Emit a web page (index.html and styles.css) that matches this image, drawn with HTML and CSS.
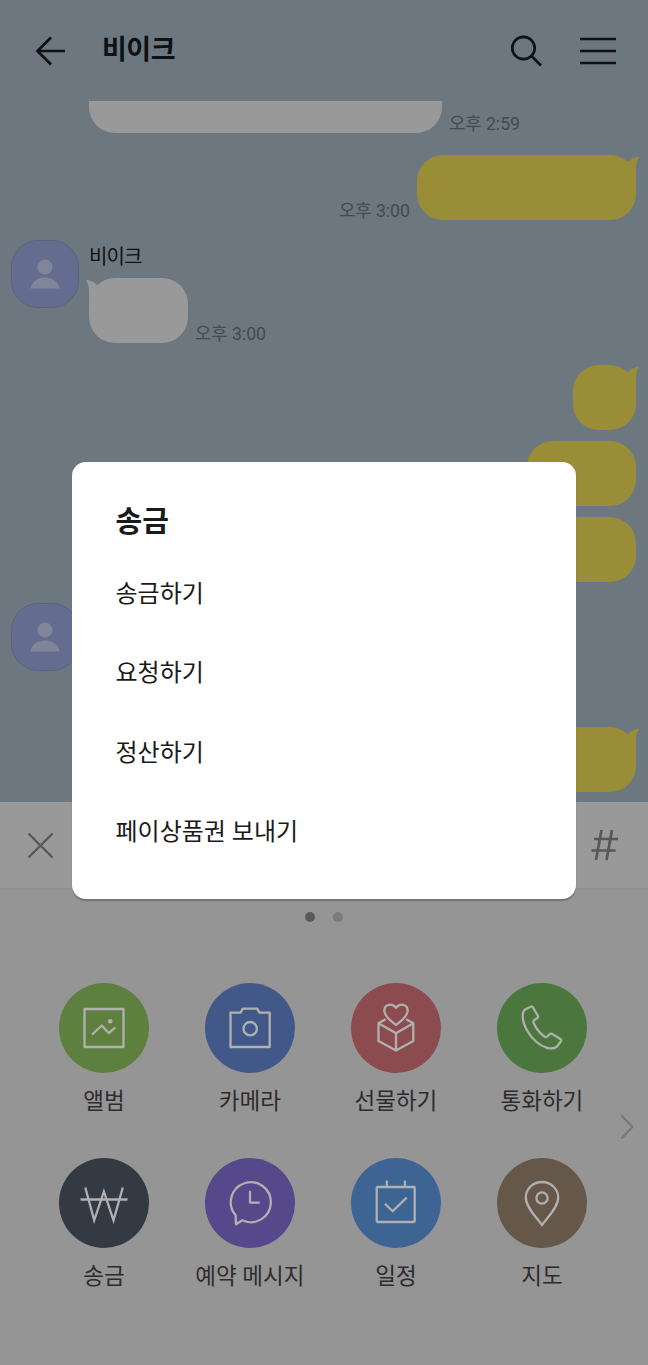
FILE: index.html
```html
<!DOCTYPE html>
<html lang="ko">
<head>
<meta charset="utf-8">
<meta name="viewport" content="width=device-width">
<title>비이크</title>
<link rel="stylesheet" href="styles.css">
</head>
<body>
<div class="screen">
  <header class="header">
    <svg class="back" width="32" height="32" viewBox="0 0 32 32"><path d="M17 2.500 3.500 16 17 29.500M3.500 16H31"/></svg>
    <h1 class="room">비이크</h1>
    <svg class="search" width="34" height="34" viewBox="0 0 34 34"><circle cx="13.500" cy="14" r="11.200"/><path d="m21.500 22 9.500 9.500"/></svg>
    <svg class="menu-icon" width="38" height="30" viewBox="0 0 38 30"><path d="M1 3h36M1 15h36M1 27h36"/></svg>
  </header>

  <main class="chat">
    <div class="row received cut"><div class="bubble"></div><time>오후 2:59</time></div>
    <div class="row sent first"><time>오후 3:00</time><div class="bubble wide"><svg class="tail" width="17" height="25" viewBox="0 0 17 25"><path d="M5 7Q10 2 16.500 1.500Q13 6 13 14V25H5Z"/></svg></div></div>
    <div class="person">
      <div class="avatar"><svg width="30" height="30" viewBox="0 0 30 30"><circle cx="15" cy="8" r="7.600"/><path d="M.5 29.500C2 22 8 18.500 15 18.500S28 22 29.500 29.500Z"/></svg></div>
      <div class="message">
        <div class="name">비이크</div>
        <div class="row received"><div class="bubble short"><svg class="tail" width="17" height="25" viewBox="0 0 17 25"><path d="M12 7Q7 2 .8 1.800Q4 6 4 14V25H12Z"/></svg></div><time>오후 3:00</time></div>
      </div>
    </div>
    <div class="row sent burst"><div class="bubble tiny"><svg class="tail" width="17" height="25" viewBox="0 0 17 25"><path d="M5 7Q10 2 16.500 1.500Q13 6 13 14V25H5Z"/></svg></div></div>
    <div class="row sent next"><div class="bubble medium"></div></div>
    <div class="row sent next"><div class="bubble medium"></div></div>
    <div class="person second">
      <div class="avatar"><svg width="30" height="30" viewBox="0 0 30 30"><circle cx="15" cy="8" r="7.600"/><path d="M.5 29.500C2 22 8 18.500 15 18.500S28 22 29.500 29.500Z"/></svg></div>
    </div>
    <div class="row sent last"><div class="bubble medium"><svg class="tail" width="17" height="25" viewBox="0 0 17 25"><path d="M5 7Q10 2 16.500 1.500Q13 6 13 14V25H5Z"/></svg></div></div>
  </main>

  <div class="input-bar">
    <svg width="28" height="28" viewBox="0 0 28 28"><path d="m2.500 2.500 24 24M26.500 2.500 2.500 26.500"/></svg>
    <svg class="hash" width="28" height="32" viewBox="0 0 28 32"><path d="M10.500 1 5 31M21 1 15.500 31M3 10h24M.5 21.500h24"/></svg>
  </div>

  <section class="panel">
    <div class="dots"><i class="on"></i><i></i></div>
    <div class="grid">
      <div class="item"><svg class="disc album" viewBox="0 0 90 90"><path d="M25.500 26h39v38h-39zM33 51.700l9.700-9.200 7 7.500 6.600-5.300"/><circle class="fill" cx="51.200" cy="38.300" r="2.300"/></svg><span>앨범</span></div>
      <div class="item"><svg class="disc camera" viewBox="0 0 90 90"><path d="M25.500 29.700h10l2.300-4.100h14.400l2.300 4.100h10.200V64H25.500z"/><circle cx="45.200" cy="45.700" r="6.700"/></svg><span>카메라</span></div>
      <div class="item"><svg class="disc gift" viewBox="0 0 90 90"><path d="M45 42C41 38.500 33.300 34 33.300 27.800C33.300 21.400 41 19.500 45 24.900C49 19.500 56.700 21.400 56.700 27.800C56.700 34 49 38.500 45 42ZM34.600 36.300 27.500 40.300V58L45 67.500 62.300 58V40.300L55.200 36.300M27.500 40.300 45 50.300 62.300 40.300M45 50.300V67.500"/></svg><span>선물하기</span></div>
      <div class="item"><svg class="disc call" viewBox="0 0 90 90"><path d="M28.500 26.300 33.700 23.800Q35.200 23 36 24.500L41 33Q41.500 34.200 40.500 35L37.300 37Q35.800 38 36.600 40Q40.500 48.500 47.500 53.600Q49 54.600 50.200 53.500L53 51Q54 50.200 55.200 50.900L63.300 56Q64.800 57 63.800 58.500L60.800 62.500C55.500 69 44.500 63.300 39.500 59C32 52.500 25.700 42 25.700 33Q25.700 28 28.500 26.300Z"/></svg><span>통화하기</span></div>
      <div class="item"><svg class="disc won" viewBox="0 0 90 90"><path d="M26.300 29.500 35.200 62.300 44.900 33.500 54.500 62.300 63.800 29.500M21.500 41.500h47"/></svg><span>송금</span></div>
      <div class="item"><svg class="disc reserve" viewBox="0 0 90 90"><path d="M30.600 57.200A20 20 0 1 1 37.300 62.300L31 66.300ZM45 32.800V44.600H54.800"/></svg><span>예약 메시지</span></div>
      <div class="item"><svg class="disc calendar" viewBox="0 0 90 90"><rect x="25.700" y="29" width="38" height="35" rx="1"/><path d="M35.900 22.500V29M53.900 22.500V29M34 45.700l7.700 7.500 14-13.500"/></svg><span>일정</span></div>
      <div class="item"><svg class="disc map" viewBox="0 0 90 90"><path d="M45 67.200C41 60.700 28.800 50 28.800 39.500A16.200 15.500 0 0 1 61.200 39.500C61.200 50 49 60.700 45 67.200Z"/><circle cx="45" cy="40" r="5.600"/></svg><span>지도</span></div>
    </div>
    <svg class="more" width="14" height="26" viewBox="0 0 14 26"><path d="m1.500 1.500 11 11.500-11 11.500"/></svg>
  </section>

  <div class="dialog">
    <h2>송금</h2>
    <ul>
      <li>송금하기</li>
      <li>요청하기</li>
      <li>정산하기</li>
      <li>페이상품권 보내기</li>
    </ul>
  </div>
</div>
</body>
</html>
```
FILE: styles.css
```css
* { box-sizing: border-box; }
body { margin: 0; font-family: Roboto, "Noto Sans CJK KR", sans-serif; }
svg { display: block; flex: none; }
h1, h2, ul { margin: 0; padding: 0; }

.screen {
  position: relative;
  display: flex;
  flex-direction: column;
  width: 648px;
  height: 1365px;
  overflow: hidden;
  background: #6d7780;
  fill: none;
}

.header {
  display: flex;
  align-items: center;
  height: 101px;
  padding: 0 31px 0 34px;
  stroke: #101112;
  stroke-width: 2.7;
}
.room {
  flex: 1;
  padding: 0 0 2px 36px;
  color: #101112;
  font-size: 27px;
  line-height: 36px;
  font-weight: 700;
  letter-spacing: -0.5px;
}
.menu-icon { margin-left: 35px; }

.chat { height: 701px; }
.row { display: flex; align-items: flex-end; gap: 7px; }
.row time {
  height: 19px;
  color: #434a52;
  font-size: 17.7px;
  line-height: 20px;
  white-space: nowrap;
}
.bubble { position: relative; height: 65px; border-radius: 26px; }
.received .bubble { background: #999; fill: #999; }
.sent { justify-content: flex-end; padding-right: 12px; }
.sent .bubble { background: #998d37; fill: #998d37; }
.cut { padding-left: 89px; }
.cut .bubble { width: 353px; height: 32px; border-radius: 0 0 26px 26px; }
.first { margin-top: 22px; }
.wide { width: 219px; }
.short { width: 99px; }
.tiny { width: 63px; }
.medium { width: 109px; }
.tail { position: absolute; top: 0; }
.sent .tail { right: -4px; }
.received .tail { left: -4px; }

.person { display: flex; gap: 10px; margin-top: 20px; padding-left: 11px; }
.avatar {
  display: grid;
  place-items: center;
  width: 68px;
  height: 68px;
  border: 1px solid #59627f;
  border-radius: 27px;
  background: #646d90;
  fill: #80859a;
}
.name {
  height: 38px;
  padding-top: 1px;
  color: #101112;
  font-size: 20px;
  line-height: 32px;
  letter-spacing: -0.9px;
}
.burst { margin-top: 22px; }
.next { margin-top: 11px; }
.second { margin-top: 21px; }
.last { margin-top: 56px; }

.input-bar {
  display: flex;
  align-items: center;
  justify-content: space-between;
  height: 87px;
  padding: 0 29px 0 26px;
  border-bottom: 1px solid #909091;
  background: #999;
  stroke: #55575b;
  stroke-width: 2.3;
}
.hash { stroke-width: 2.7; }

.panel { position: relative; height: 476px; background: #959595; }
.dots { display: flex; justify-content: center; gap: 18px; padding-top: 23px; }
.dots i { width: 10px; height: 10px; border-radius: 50%; background: #7b7b7b; }
.dots .on { background: #595959; }
.grid {
  display: grid;
  grid-template-columns: repeat(4, 146px);
  grid-auto-rows: 175px;
  padding: 61px 0 0 31.4px;
}
.item {
  display: flex;
  flex-direction: column;
  align-items: center;
  color: #2c2c2d;
  font-size: 22.5px;
  line-height: 32px;
}
.item span { margin: 12px 0 0 -1px; white-space: nowrap; }
.disc {
  width: 90px;
  height: 90px;
  border-radius: 50%;
  stroke: #b0b0b0;
  stroke-width: 2.3;
  stroke-linejoin: round;
}
.fill { fill: #b0b0b0; stroke: none; }
.album { background: #5d803e; }
.camera { background: #425888; }
.gift { background: #8c4b4f; }
.call { background: #4b763e; }
.won { background: #343a43; stroke-linejoin: miter; }
.reserve { background: #55488b; }
.calendar { background: #3e6494; }
.map { background: #665849; }
.more { position: absolute; right: 14px; top: 225px; stroke: #777; stroke-width: 2; }

.dialog {
  position: absolute;
  left: 72px;
  top: 462px;
  width: 504px;
  height: 437px;
  padding: 40px 43px 0 43.5px;
  border-radius: 14px;
  background: #fff;
  color: #1a1a1a;
  box-shadow: 0 2px 1px #727272;
}
.dialog h2 { font-size: 29px; line-height: 40px; font-weight: 700; }
.dialog ul { padding-top: 13px; list-style: none; }
.dialog li { height: 79.3px; font-size: 24px; line-height: 79.3px; }
```
